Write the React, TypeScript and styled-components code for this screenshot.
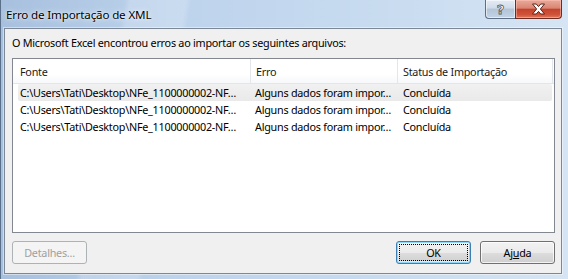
import React from "react";
import styled, { createGlobalStyle, css } from "styled-components";

const GlobalStyle = createGlobalStyle`
    html, body {
        margin: 0;
        padding: 0;
        overflow: hidden;
        background: #6b8cb3;
    }
`;

const FONT = `"Segoe UI", "Noto Sans", "Open Sans", sans-serif`;

const WindowDiv = styled.div`
    width: 568px;
    height: 279px;
    box-sizing: border-box;
    display: flex;
    flex-direction: column;
    font-family: ${FONT};
    font-size: 10.8px;
    letter-spacing: -0.25px;
    color: #000;
    border-left: 1px solid #5a6f8a;
    background:
        linear-gradient(100deg, rgba(255, 255, 255, 0) 20%, rgba(255, 255, 255, 0.18) 21%, rgba(255, 255, 255, 0.18) 30%, rgba(255, 255, 255, 0) 31%),
        linear-gradient(to right, #a7c0de 0%, #bdd3ec 30%, #c9dcf0 70%, #d6e5f4 100%);
`;

const TitleBar = styled.div`
    height: 28px;
    display: flex;
    align-items: center;
    padding-left: 5px;
    flex-shrink: 0;
`;

const TitleText = styled.span`
    font-size: 11.6px;
    letter-spacing: -0.15px;
    line-height: 15px;
    text-shadow: 0 0 6px rgba(255, 255, 255, 0.9), 0 0 2px rgba(255, 255, 255, 0.9);
`;

const CaptionGroup = styled.div`
    margin-left: auto;
    margin-right: 6px;
    align-self: flex-start;
    display: flex;
    height: 19px;
`;

const CaptionButton = styled.div<{ $kind: "help" | "close" }>`
    height: 19px;
    box-sizing: border-box;
    display: flex;
    align-items: center;
    justify-content: center;
    border: 1px solid #5e6f85;
    border-top: none;
    ${(p) =>
        p.$kind === "help"
            ? css`
                  width: 30px;
                  border-right: none;
                  border-radius: 0 0 0 4px;
                  background: linear-gradient(#e4ecf5 0%, #cfdbe8 45%, #b3c4d8 50%, #c3d3e5 100%);
                  box-shadow: inset 0 0 0 1px rgba(255, 255, 255, 0.55);
              `
            : css`
                  width: 47px;
                  border-color: #6e2b22;
                  border-radius: 0 0 4px 0;
                  background: linear-gradient(#e9aa9a 0%, #d98572 45%, #c5432d 52%, #cf5238 80%, #e07a5b 100%);
                  box-shadow: inset 0 0 0 1px rgba(255, 200, 190, 0.5);
              `}
`;

const HelpGlyph = styled.span`
    font-family: "DejaVu Sans", sans-serif;
    font-weight: bold;
    font-size: 13px;
    line-height: 13px;
    color: #fff;
    -webkit-text-stroke: 0.8px #4d5a6a;
    margin-top: 1px;
`;

const ClientArea = styled.div`
    flex: 1;
    margin: 0 6px 5px 3px;
    border: 1px solid #7d8896;
    box-shadow: 0 0 0 1px rgba(255, 255, 255, 0.45);
    background: #f0f0f0;
    display: flex;
    flex-direction: column;
    padding: 6px 6px 9px 7px;
    min-height: 0;
`;

const Message = styled.div`
    line-height: 15px;
`;

const ListView = styled.div`
    flex: 1;
    margin-top: 8px;
    border: 1px solid #828790;
    background: #fff;
    display: flex;
    flex-direction: column;
    overflow: hidden;
`;

const HeaderRow = styled.div`
    height: 24px;
    display: grid;
    grid-template-columns: 237px 147px 155px 1fr;
    border-bottom: 1px solid #e5e5e5;
    background: linear-gradient(#ffffff, #ffffff 60%, #f7f8fa);
`;

const HeaderCell = styled.div<{ $first?: boolean }>`
    display: flex;
    align-items: center;
    box-sizing: border-box;
    padding-left: ${(p) => (p.$first ? "7px" : "5px")};
    border-left: ${(p) => (p.$first ? "none" : "1px solid #e3e6ea")};
    color: #1a1a1a;
    white-space: nowrap;
`;

const Row = styled.div<{ $selected?: boolean }>`
    height: 17px;
    margin: 0 2px 0 5px;
    display: grid;
    grid-template-columns: 232px 147px 1fr;
    box-sizing: border-box;
    border-radius: 2px;
    ${(p) =>
        p.$selected &&
        css`
            background: linear-gradient(#f1f1f1, #e9e9e9);
        `}
`;

const Cell = styled.div<{ $pad: number }>`
    display: flex;
    align-items: center;
    padding-left: ${(p) => p.$pad}px;
    white-space: nowrap;
    overflow: hidden;
`;

const ButtonBar = styled.div`
    margin-top: 8px;
    display: flex;
    align-items: center;
    gap: 9px;
`;

const Button = styled.button<{ $default?: boolean }>`
    width: 75px;
    height: 23px;
    padding: 0;
    box-sizing: border-box;
    font-family: ${FONT};
    font-size: 10.8px;
    letter-spacing: -0.25px;
    color: #000;
    border: 1px solid #707070;
    border-radius: 3px;
    background: linear-gradient(#f2f2f2 0%, #ebebeb 50%, #dddddd 51%, #cfcfcf 100%);
    box-shadow: inset 0 0 0 1px rgba(255, 255, 255, 0.75);

    ${(p) =>
        p.$default &&
        css`
            border-color: #3c7fb1;
            box-shadow: inset 0 0 0 1px #8fd6f7, inset 0 0 0 2px rgba(255, 255, 255, 0.5);
            outline: 1px dotted #000;
            outline-offset: -4px;
        `}

    &:disabled {
        color: #a0a0a0;
        border-color: #adb2b5;
        background: #f4f4f4;
        box-shadow: none;
    }
`;

const Spacer = styled.div`
    flex: 1;
`;

const PATH = "C:\\Users\\Tati\\Desktop\\NFe_1100000002-NF…";
const ERROR = "Alguns dados foram impor…";

const rows = [
    { fonte: PATH, erro: ERROR, status: "Concluída", selected: true },
    { fonte: PATH, erro: ERROR, status: "Concluída" },
    { fonte: PATH, erro: ERROR, status: "Concluída" },
];

function CloseGlyph(): JSX.Element {
    return (
        <svg width="15" height="12" viewBox="0 0 15 12">
            <path
                d="M1.5 1 H5.3 L7.5 3.6 L9.7 1 H13.5 L9.4 6 L13.5 11 H9.7 L7.5 8.4 L5.3 11 H1.5 L5.6 6 Z"
                fill="#fff"
                stroke="#5a2219"
                strokeWidth="1"
                strokeLinejoin="round"
            />
        </svg>
    );
}

export default function App(): JSX.Element {
    return (
        <>
            <GlobalStyle />
            <WindowDiv>
                <TitleBar>
                    <TitleText>Erro de Importação de XML</TitleText>
                    <CaptionGroup>
                        <CaptionButton $kind="help">
                            <HelpGlyph>?</HelpGlyph>
                        </CaptionButton>
                        <CaptionButton $kind="close">
                            <CloseGlyph />
                        </CaptionButton>
                    </CaptionGroup>
                </TitleBar>
                <ClientArea>
                    <Message>O Microsoft Excel encontrou erros ao importar os seguintes arquivos:</Message>
                    <ListView>
                        <HeaderRow>
                            <HeaderCell $first>Fonte</HeaderCell>
                            <HeaderCell>Erro</HeaderCell>
                            <HeaderCell>Status de Importação</HeaderCell>
                            <HeaderCell />
                        </HeaderRow>
                        {rows.map((r, i) => (
                            <Row key={i} $selected={r.selected}>
                                <Cell $pad={2}>{r.fonte}</Cell>
                                <Cell $pad={5}>{r.erro}</Cell>
                                <Cell $pad={6}>{r.status}</Cell>
                            </Row>
                        ))}
                    </ListView>
                    <ButtonBar>
                        <Button disabled>Detalhes...</Button>
                        <Spacer />
                        <Button $default>OK</Button>
                        <Button>
                            Aj<u>u</u>da
                        </Button>
                    </ButtonBar>
                </ClientArea>
            </WindowDiv>
        </>
    );
}
